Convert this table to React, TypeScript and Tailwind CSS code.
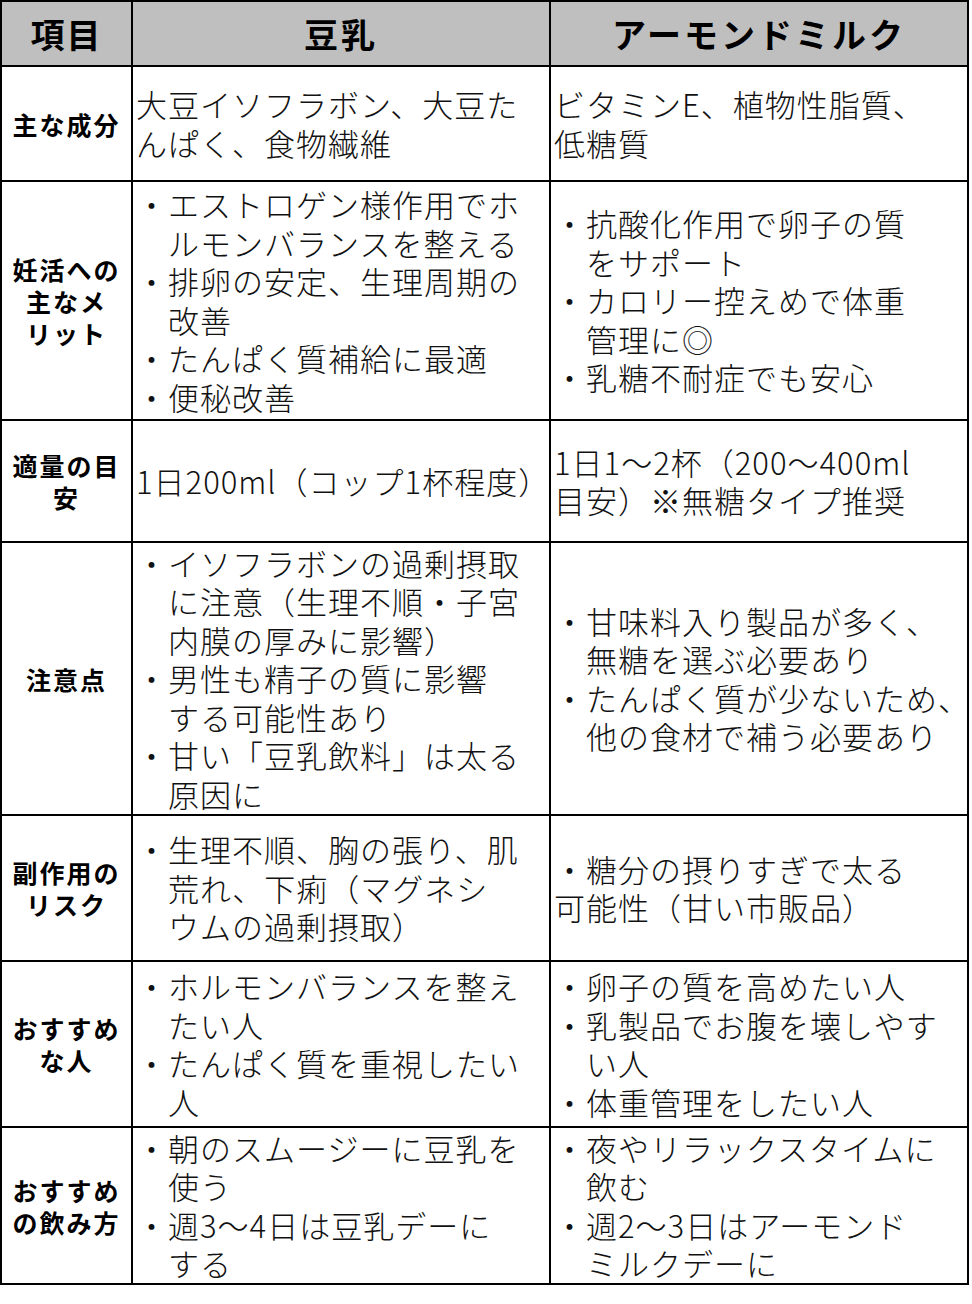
import React from "react";

type Line = { t: string; indent?: boolean };

type Row = {
  label: string[];
  soy: Line[];
  almond: Line[];
  height: string;
};

// helper: "・" starts a bullet, "_" marks a hanging continuation line
const L = (...lines: string[]): Line[] =>
  lines.map((s) => (s.startsWith("_") ? { t: s.slice(1), indent: true } : { t: s }));

const rows: Row[] = [
  {
    label: ["主な成分"],
    soy: L("大豆イソフラボン、大豆た", "んぱく、食物繊維"),
    almond: L("ビタミンE、植物性脂質、", "低糖質"),
    height: "h-[115px]",
  },
  {
    label: ["妊活への", "主なメ", "リット"],
    soy: L(
      "・エストロゲン様作用でホ",
      "_ルモンバランスを整える",
      "・排卵の安定、生理周期の",
      "_改善",
      "・たんぱく質補給に最適",
      "・便秘改善"
    ),
    almond: L(
      "・抗酸化作用で卵子の質",
      "_をサポート",
      "・カロリー控えめで体重",
      "_管理に◎",
      "・乳糖不耐症でも安心"
    ),
    height: "h-[239px]",
  },
  {
    label: ["適量の目", "安"],
    soy: L("1日200ml（コップ1杯程度）"),
    almond: L("1日1〜2杯（200〜400ml", "目安）※無糖タイプ推奨"),
    height: "h-[122px]",
  },
  {
    label: ["注意点"],
    soy: L(
      "・イソフラボンの過剰摂取",
      "_に注意（生理不順・子宮",
      "_内膜の厚みに影響）",
      "・男性も精子の質に影響",
      "_する可能性あり",
      "・甘い「豆乳飲料」は太る",
      "_原因に"
    ),
    almond: L(
      "・甘味料入り製品が多く、",
      "_無糖を選ぶ必要あり",
      "・たんぱく質が少ないため、",
      "_他の食材で補う必要あり"
    ),
    height: "h-[273px]",
  },
  {
    label: ["副作用の", "リスク"],
    soy: L("・生理不順、胸の張り、肌", "_荒れ、下痢（マグネシ", "_ウムの過剰摂取）"),
    almond: L("・糖分の摂りすぎで太る", "可能性（甘い市販品）"),
    height: "h-[146px]",
  },
  {
    label: ["おすすめ", "な人"],
    soy: L("・ホルモンバランスを整え", "_たい人", "・たんぱく質を重視したい", "_人"),
    almond: L("・卵子の質を高めたい人", "・乳製品でお腹を壊しやす", "_い人", "・体重管理をしたい人"),
    height: "h-[166px]",
  },
  {
    label: ["おすすめ", "の飲み方"],
    soy: L("・朝のスムージーに豆乳を", "_使う", "・週3〜4日は豆乳デーに", "_する"),
    almond: L("・夜やリラックスタイムに", "_飲む", "・週2〜3日はアーモンド", "_ミルクデーに"),
    height: "h-[157px]",
  },
];

const Body = ({ lines }: { lines: Line[] }) => (
  <div className="flex flex-col justify-center h-full pl-[3px] text-[31px] leading-[38.5px] tracking-[1px] font-light text-[#111]">
    {lines.map((l, i) => (
      <div key={i} className={"whitespace-nowrap " + (l.indent ? "pl-[32px]" : "")}>
        {l.t}
      </div>
    ))}
  </div>
);

export default function App() {
  return (
    <div className="bg-white w-[972px] h-[1304px] font-['Noto_Sans_CJK_JP',sans-serif] text-black">
      <div className="w-[969px] border-t-2 border-l-2 border-black">
        {/* header */}
        <div className="grid grid-cols-[131px_418px_418px] h-[65px] bg-[#bfbfbf]">
          <div className="flex items-center justify-center border-r-2 border-b-2 border-black text-[34px] font-bold tracking-[2px]">
            項目
          </div>
          <div className="flex items-center justify-center border-r-2 border-b-2 border-black text-[34px] font-bold tracking-[3px]">
            豆乳
          </div>
          <div className="flex items-center justify-center border-r-2 border-b-2 border-black text-[34px] font-bold tracking-[3px]">
            アーモンドミルク
          </div>
        </div>

        {rows.map((r, i) => (
          <div key={i} className={"grid grid-cols-[131px_418px_418px] " + r.height}>
            <div className="flex flex-col items-center justify-center border-r-2 border-b-2 border-black text-[25px] leading-[32px] font-bold tracking-[2px]">
              {r.label.map((s, j) => (
                <div key={j} className="whitespace-nowrap">
                  {s}
                </div>
              ))}
            </div>
            <div className="border-r-2 border-b-2 border-black">
              <Body lines={r.soy} />
            </div>
            <div className="border-r-2 border-b-2 border-black">
              <Body lines={r.almond} />
            </div>
          </div>
        ))}
      </div>
    </div>
  );
}
